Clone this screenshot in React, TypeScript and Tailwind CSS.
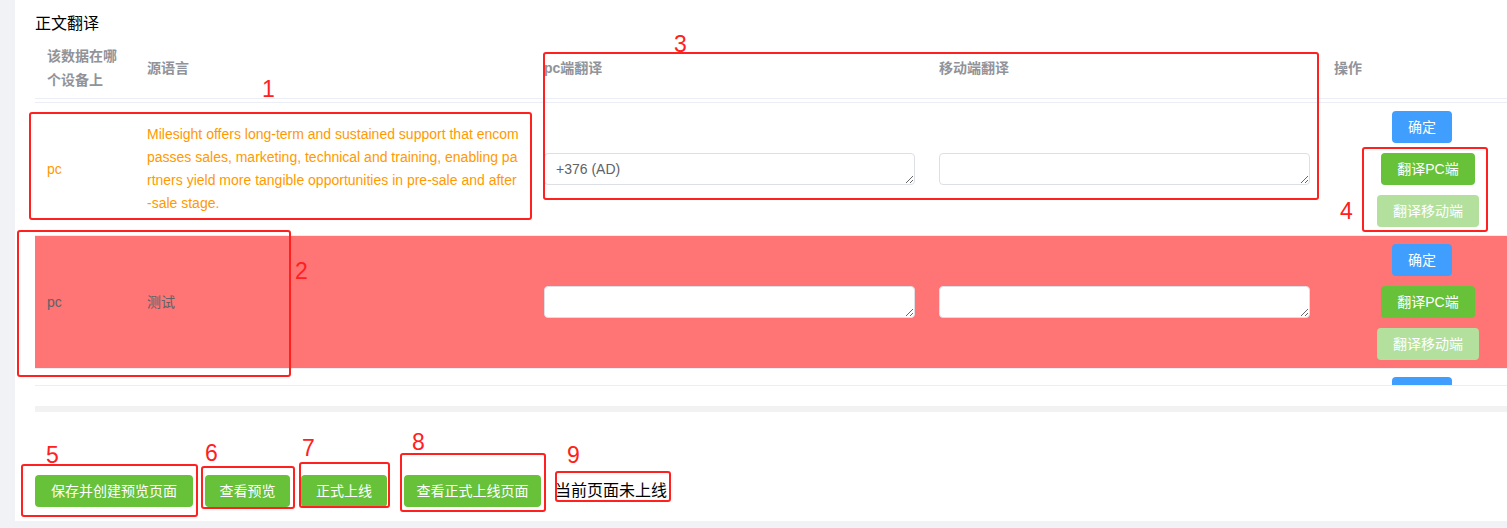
import React from 'react';

const sourceText =
  'Milesight offers long-term and sustained support that encompasses sales, marketing, technical and training, enabling partners yield more tangible opportunities in pre-sale and after-sale stage.';

const cols = 'grid grid-cols-[100px_397px_395px_395px_212px]';

function Btn({ color, className = '', children }: { color: string; className?: string; children: React.ReactNode }) {
  return (
    <button className={`h-8 whitespace-nowrap rounded-[4px] text-[14px] leading-none text-white ${color} ${className}`}>
      {children}
    </button>
  );
}

function Actions({ partial = false }: { partial?: boolean }) {
  return (
    <div className="flex flex-col items-center gap-[10px]">
      <Btn color="bg-[#409eff]" className="mr-3 w-[60px]">确定</Btn>
      {!partial && (
        <>
          <Btn color="bg-[#67c23a]" className="w-[94px]">翻译PC端</Btn>
          <Btn color="bg-[#b3e19d]" className="w-[102px]">翻译移动端</Btn>
        </>
      )}
    </div>
  );
}

function Field({ value = '' }: { value?: string }) {
  return (
    <div className="px-3">
      <textarea
        defaultValue={value}
        className="block h-[32px] w-full resize-y rounded-[4px] border border-[#dcdfe6] bg-white px-[11px] py-[4px] text-[14px] leading-[22px] text-[#606266] outline-none"
      />
    </div>
  );
}

function Table() {
  return (
    <div className="mt-[1px]">
      {/* Header */}
      <div className={`${cols} h-[62px] items-center border-b border-[#ebeef5] text-[14px] font-bold leading-[24px] text-[#909399]`}>
        <div className="px-3">该数据在哪个设备上</div>
        <div className="px-3">源语言</div>
        <div className="px-3">pc端翻译</div>
        <div className="px-3">移动端翻译</div>
        <div className="px-3">操作</div>
      </div>

      {/* Body */}
      <div className="mt-[3px] h-[284px] overflow-hidden border-y border-[#ebeef5]">
        <div className={`${cols} items-center border-b border-[#ebeef5] py-2 text-[14px] text-[#ff9900]`}>
          <div className="px-3 leading-[23px]">pc</div>
          <div className="break-all px-3 leading-[23px]">{sourceText}</div>
          <Field value="+376 (AD)" />
          <Field />
          <Actions />
        </div>
        <div className={`${cols} items-center border-b border-[#ebeef5] bg-[#ff7474] py-2 text-[14px] text-[#606266]`}>
          <div className="px-3 leading-[23px]">pc</div>
          <div className="px-3 leading-[23px]">测试</div>
          <Field />
          <Field />
          <Actions />
        </div>
        <div className={`${cols} items-start py-2`}>
          <div />
          <div />
          <div />
          <div />
          <Actions partial />
        </div>
      </div>

      {/* horizontal scrollbar track */}
      <div className="mt-[20px] h-[6px] bg-[#f2f2f2]" />
    </div>
  );
}

function Mark({ className }: { className: string }) {
  return <div className={`absolute rounded-[3px] border-2 border-[#ff2020] ${className}`} />;
}

function Num({ className, n }: { className: string; n: number }) {
  return <span className={`absolute text-[23px] leading-none text-[#ff2020] ${className}`}>{n}</span>;
}

export default function App() {
  return (
    <div className="relative h-[528px] w-[1507px] overflow-hidden bg-[#f0f2f5] font-['Liberation_Sans','Noto_Sans_CJK_SC',sans-serif]">
      <div className="ml-[15px] h-[521px] overflow-hidden bg-white pl-[20px] pt-[12px]">
        <h2 className="text-[16px] leading-[24px] text-black">正文翻译</h2>
        <Table />

        <div className="mt-[63px] flex items-center">
          <Btn color="bg-[#67c23a]" className="w-[158px]">保存并创建预览页面</Btn>
          <Btn color="bg-[#67c23a]" className="ml-[12px] w-[85px]">查看预览</Btn>
          <Btn color="bg-[#67c23a]" className="ml-[11px] w-[86px]">正式上线</Btn>
          <Btn color="bg-[#67c23a]" className="ml-[17px] w-[137px]">查看正式上线页面</Btn>
          <span className="ml-[14px] text-[16px] leading-[24px] text-black">当前页面未上线</span>
        </div>
      </div>

      {/* annotation overlay */}
      <Mark className="left-[29px] top-[112px] h-[108px] w-[503px]" />
      <Mark className="left-[17px] top-[230px] h-[147px] w-[274px]" />
      <Mark className="left-[543px] top-[52px] h-[148px] w-[776px]" />
      <Mark className="left-[1362px] top-[147px] h-[85px] w-[126px]" />
      <Mark className="left-[21px] top-[464px] h-[53px] w-[177px]" />
      <Mark className="left-[201px] top-[466px] h-[43px] w-[94px]" />
      <Mark className="left-[299px] top-[462px] h-[46px] w-[91px]" />
      <Mark className="left-[400px] top-[453px] h-[59px] w-[146px]" />
      <Mark className="left-[555px] top-[471px] h-[31px] w-[116px]" />

      <Num n={1} className="left-[262px] top-[78px]" />
      <Num n={2} className="left-[295px] top-[260px]" />
      <Num n={3} className="left-[674px] top-[33px]" />
      <Num n={4} className="left-[1340px] top-[200px]" />
      <Num n={5} className="left-[46px] top-[444px]" />
      <Num n={6} className="left-[205px] top-[442px]" />
      <Num n={7} className="left-[302px] top-[437px]" />
      <Num n={8} className="left-[412px] top-[431px]" />
      <Num n={9} className="left-[567px] top-[444px]" />
    </div>
  );
}
